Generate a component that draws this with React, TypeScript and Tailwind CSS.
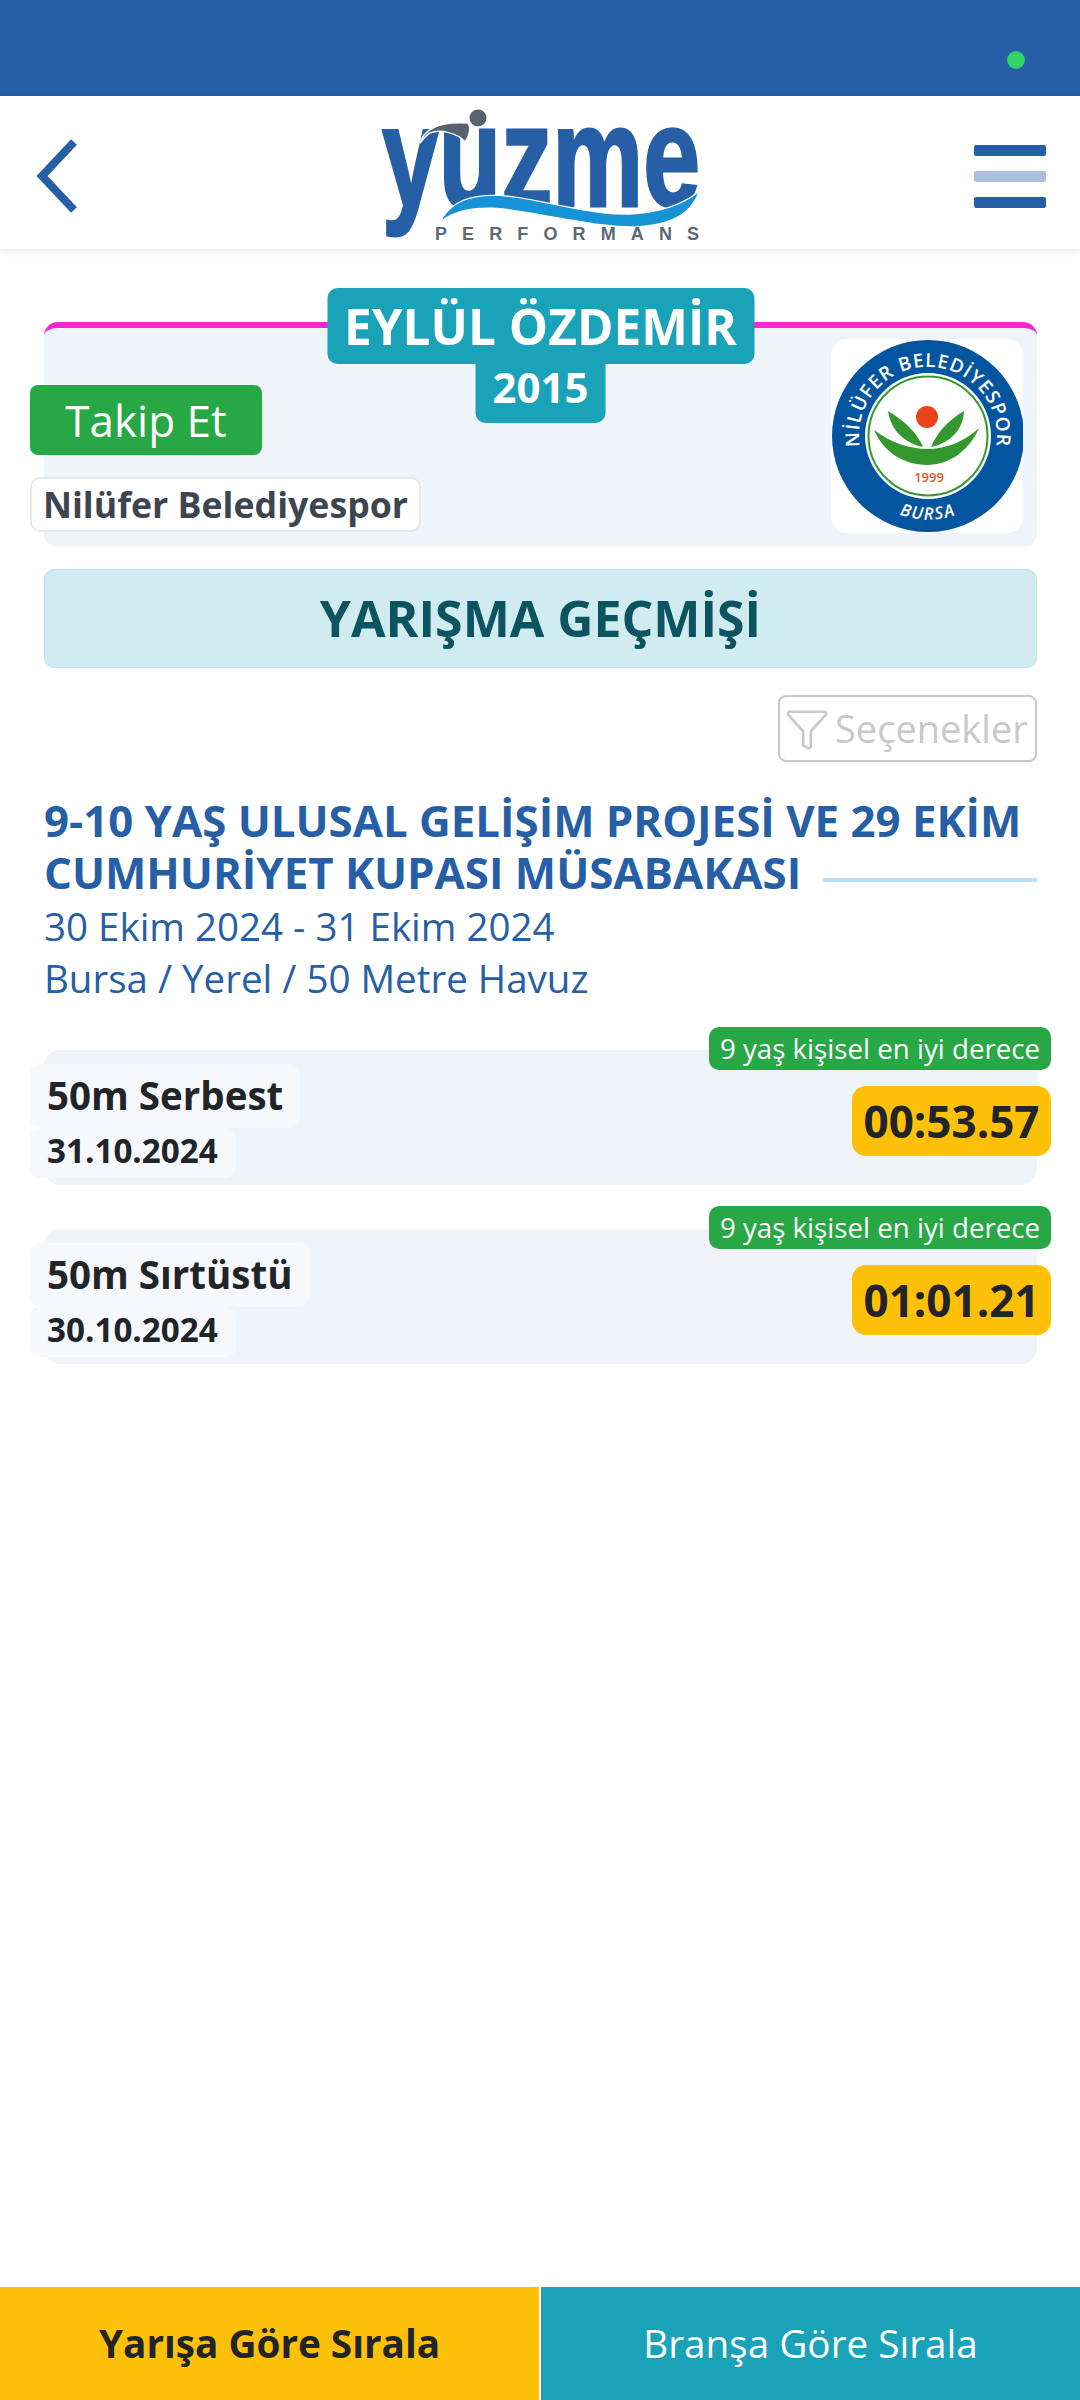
import { Filter } from "lucide-react";

const results = [
  { branch: "50m Serbest", date: "31.10.2024", time: "00:53.57" },
  { branch: "50m Sırtüstü", date: "30.10.2024", time: "01:01.21" },
];

function YuzmeLogo() {
  return (
    <svg className="h-[153px] w-[400px] overflow-visible" viewBox="0 6 400 153">
      <text x="42" y="116" fontFamily="Liberation Sans, sans-serif" fontWeight="700" fontSize="142" fill="#265fa6" stroke="#265fa6" strokeWidth="3" textLength="318" lengthAdjust="spacingAndGlyphs">
        yuzme
      </text>
      {/* swimmer */}
      <circle cx="138" cy="28" r="8.5" fill="#56636f" />
      <path d="M80 53 C84 40 98 31 128 33 C131 37 130 46 125 52 C118 43 100 39 90 43 C86 45 83 49 80 53Z" fill="#56636f" stroke="#fff" strokeWidth="1.5" />
      {/* wave */}
      <path d="M102 130 C112 112 130 105 160 106 C190 108 230 120 267 124 C300 127 335 121 358 103 C350 122 335 133 300 136 C260 138 210 124 160 118 C135 116 115 120 102 130Z" fill="#1593d6" stroke="#fff" strokeWidth="2.5" paintOrder="stroke" />
      <text x="95" y="150" fontFamily="Liberation Sans, sans-serif" fontSize="18" fontWeight="700" fill="#5d6872" textLength="264">
        PERFORMANS
      </text>
    </svg>
  );
}

function ClubCrest() {
  return (
    <svg className="h-full w-full" viewBox="0 0 192 194">
      <circle cx="97" cy="97" r="96" fill="#04559f" />
      <circle cx="97" cy="97" r="63" fill="#fff" />
      <circle cx="97" cy="97" r="59.5" fill="none" stroke="#35982f" strokeWidth="2" />
      <defs>
        <path id="crest-top" d="M30.4 114.9 A69 69 0 1 1 163.6 114.9" />
        <path id="crest-bottom" d="M27 143 A84 84 0 0 0 167 143" />
      </defs>
      <text fontFamily="Open Sans, sans-serif" fontWeight="600" fontSize="19" fill="#fff" letterSpacing="1">
        <textPath href="#crest-top" startOffset="50%" textAnchor="middle">NİLÜFER BELEDİYESPOR</textPath>
      </text>
      <text fontFamily="Open Sans, sans-serif" fontWeight="600" fontSize="17" fontStyle="italic" fill="#fff" letterSpacing="1.5">
        <textPath href="#crest-bottom" startOffset="50%" textAnchor="middle">BURSA</textPath>
      </text>
      <circle cx="96" cy="78" r="11" fill="#e8431a" />
      <path d="M57 72 C74 82 86 94 92 108 C74 104 60 92 57 72Z" fill="#35982f" />
      <path d="M133 72 C116 82 106 94 100 108 C118 104 132 92 133 72Z" fill="#35982f" />
      <path d="M43 91 C60 104 80 110 96 110 C116 110 134 102 148 89 C138 112 118 126 96 126 C72 126 52 112 43 91Z" fill="#35982f" />
      <text x="98" y="143" textAnchor="middle" fontFamily="Open Sans, sans-serif" fontWeight="600" fontSize="13" fill="#e8562a">1999</text>
    </svg>
  );
}

export default function App() {
  return (
    <div className="flex min-h-[2400px] w-[1080px] flex-col bg-white font-['Open_Sans',sans-serif]">
      {/* Status bar */}
      <div className="flex h-[96px] items-center justify-end bg-[#265fa6] pr-[55px]">
        <div className="mb-[-24px] h-[18px] w-[18px] rounded-full bg-[#31d266]" />
      </div>

      {/* Header */}
      <header className="flex h-[153px] items-center bg-white pl-[30px] pr-[34px] shadow-[0_2px_8px_rgba(0,0,0,0.1)]">
        <svg className="mt-[7px] h-[76px] w-[50px]" viewBox="0 0 50 76" fill="none" stroke="#265fa6" strokeWidth="8" strokeLinejoin="miter">
          <path d="M44 4 L12 38 L44 72" />
        </svg>
        <div className="ml-[260px]">
          <YuzmeLogo />
        </div>
        <div className="ml-auto mt-[7px] flex w-[72px] flex-col gap-[15px]">
          <div className="h-[11px] rounded-[2px] bg-[#265fa6]" />
          <div className="h-[11px] rounded-[2px] bg-[#a9bfdd]" />
          <div className="h-[11px] rounded-[2px] bg-[#265fa6]" />
        </div>
      </header>

      <main className="flex-1 pl-[44px] pr-[43px]">
        {/* Athlete card */}
        <section className="relative mt-[73px] flex h-[225px] justify-between rounded-[14px] border-t-[6px] border-[#f926d2] bg-[#eff3fa] pr-[14px]">
          <div className="absolute left-1/2 top-[-40px] flex -translate-x-1/2 flex-col items-center text-white">
            <div className="flex h-[76px] w-[427px] items-center justify-center rounded-[10px] bg-[#19a2b8] text-[49.5px] font-bold whitespace-nowrap">
              EYLÜL ÖZDEMİR
            </div>
            <div className="flex h-[59px] w-[130px] items-center justify-center rounded-b-[10px] bg-[#19a2b8] pb-[15px] text-[42px] font-bold">
              2015
            </div>
          </div>
          <div className="-ml-[14px] flex flex-col items-start pt-[57px]">
            <button className="flex h-[70px] w-[232px] items-center justify-center rounded-[8px] bg-[#28a745] text-[44px] text-white">
              Takip Et
            </button>
            <div className="mt-[22px] flex h-[55px] w-[391px] items-center justify-center rounded-[10px] border-2 border-[#e6e8ee] bg-white text-[35.7px] font-bold text-[#3d4551] whitespace-nowrap">
              Nilüfer Belediyespor
            </div>
          </div>
          <div className="mt-[11px] h-[194px] w-[192px] overflow-hidden rounded-[16px] bg-white">
            <ClubCrest />
          </div>
        </section>

        {/* Section title */}
        <div className="mt-[22px] flex h-[99px] items-center justify-center rounded-[10px] border border-[#bee5eb] bg-[#d1ecf1] text-[50px] font-bold text-[#0c5460]">
          YARIŞMA GEÇMİŞİ
        </div>

        <div className="mt-[27px] flex justify-end">
          <button className="flex h-[67px] w-[259px] items-center gap-[5px] rounded-[8px] border-2 border-[#c9c9c9] pl-[4px] text-[38px] text-[#c9c9c9] whitespace-nowrap">
            <Filter className="h-[46px] w-[46px] shrink-0" strokeWidth={1.4} />
            Seçenekler
          </button>
        </div>

        {/* Competition */}
        <div className="mt-[32px] text-[#265fa6]">
          <h2 className="text-[43.8px] leading-[52px] font-bold whitespace-nowrap">
            9-10 YAŞ ULUSAL GELİŞİM PROJESİ VE 29 EKİM
          </h2>
          <div className="flex items-center gap-[22px]">
            <h2 className="text-[43.8px] leading-[52px] font-bold whitespace-nowrap">
              CUMHURİYET KUPASI MÜSABAKASI
            </h2>
            <div className="mt-[16px] h-[4px] flex-1 bg-[#b8e0f8]" />
          </div>
          <p className="mt-[2px] text-[38.5px] leading-[52px]">30 Ekim 2024 - 31 Ekim 2024</p>
          <p className="text-[38.5px] leading-[52px]">Bursa / Yerel / 50 Metre Havuz</p>
        </div>

        {/* Results */}
        <div className="mt-[46px] flex flex-col gap-[44px]">
          {results.map((r) => (
            <div key={r.branch} className="flex h-[135px] justify-between rounded-[16px] bg-[#eff3fa]">
              <div className="-ml-[14px] flex flex-col items-start pt-[14px] text-[#212529]">
                <div className="flex h-[64px] items-center rounded-[10px] bg-[#f7f8fb] px-[17px] text-[38.5px] font-bold whitespace-nowrap">
                  {r.branch}
                </div>
                <div className="flex h-[50px] items-center rounded-[10px] bg-[#f7f8fb] pb-[4px] pl-[17px] pr-[18px] text-[33.2px] font-bold">
                  {r.date}
                </div>
              </div>
              <div className="-mr-[14px] -mt-[23px] flex flex-col items-end">
                <div className="flex h-[43px] w-[342px] items-center justify-center rounded-[10px] bg-[#28a745] text-[27.7px] text-white whitespace-nowrap">
                  9 yaş kişisel en iyi derece
                </div>
                <div className="mt-[16px] flex h-[70px] w-[199px] items-center justify-center rounded-[14px] bg-[#ffc107] text-[44px] font-bold text-[#212529]">
                  {r.time}
                </div>
              </div>
            </div>
          ))}
        </div>
      </main>

      {/* Bottom tabs */}
      <div className="flex h-[113px] gap-[2px]">
        <button className="flex-1 bg-[#ffc107] text-[38.7px] font-bold text-[#212529]">Yarışa Göre Sırala</button>
        <button className="flex-1 bg-[#19a2b8] text-[38.7px] text-white">Branşa Göre Sırala</button>
      </div>
    </div>
  );
}
